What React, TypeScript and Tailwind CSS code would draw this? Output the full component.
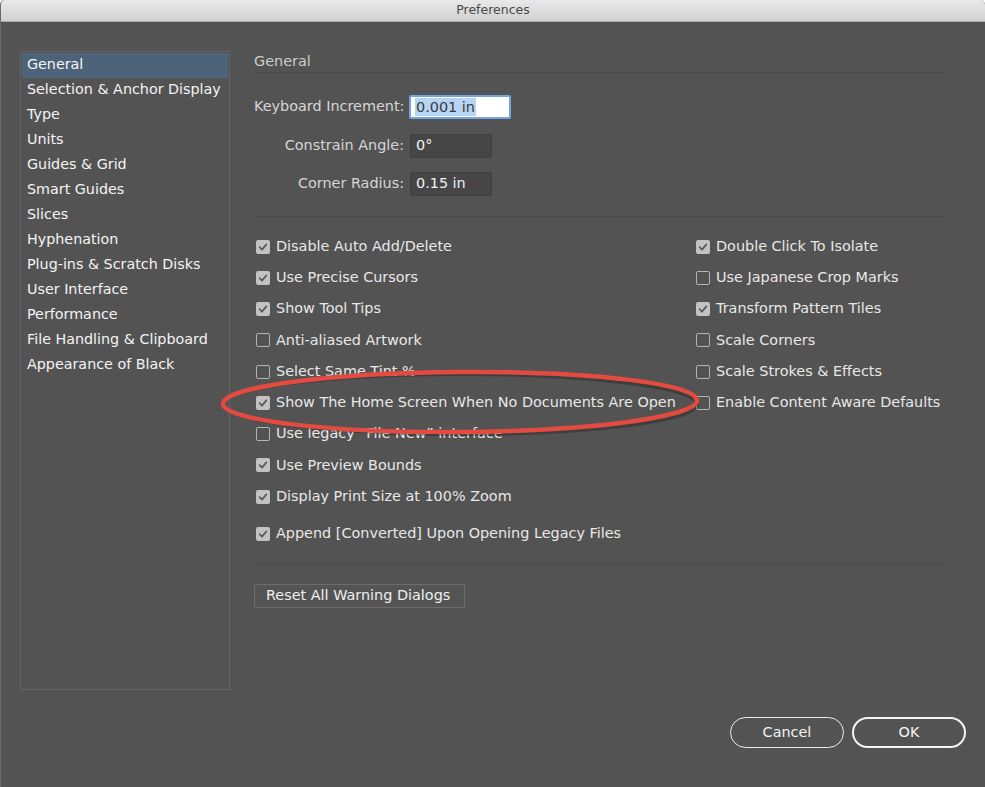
// Preferences dialog — dark panel, sidebar of sections, General page

const sections = [
  'General',
  'Selection & Anchor Display',
  'Type',
  'Units',
  'Guides & Grid',
  'Smart Guides',
  'Slices',
  'Hyphenation',
  'Plug-ins & Scratch Disks',
  'User Interface',
  'Performance',
  'File Handling & Clipboard',
  'Appearance of Black',
];

const leftOptions: [string, boolean][] = [
  ['Disable Auto Add/Delete', true],
  ['Use Precise Cursors', true],
  ['Show Tool Tips', true],
  ['Anti-aliased Artwork', false],
  ['Select Same Tint %', false],
  ['Show The Home Screen When No Documents Are Open', true],
  ['Use legacy \u201cFile New\u201d interface', false],
  ['Use Preview Bounds', true],
  ['Display Print Size at 100% Zoom', true],
];

const rightOptions: [string, boolean][] = [
  ['Double Click To Isolate', true],
  ['Use Japanese Crop Marks', false],
  ['Transform Pattern Tiles', true],
  ['Scale Corners', false],
  ['Scale Strokes & Effects', false],
  ['Enable Content Aware Defaults', false],
];

function Checkbox({ checked }: { checked: boolean }) {
  if (!checked) {
    return <span className="w-[14px] h-[14px] rounded-[2px] border border-[#b4b4b4] shrink-0" />;
  }
  return (
    <span className="w-[14px] h-[14px] rounded-[2px] bg-[#c2c2c2] shrink-0 flex items-center justify-center">
      <svg width="10" height="10" viewBox="0 0 10 10" fill="none">
        <path d="M1.6 5.2 L4 7.6 L8.4 2.4" stroke="#5a5a5a" strokeWidth="1.7" strokeLinecap="round" strokeLinejoin="round" />
      </svg>
    </span>
  );
}

function Option({ label, checked }: { label: string; checked: boolean }) {
  return (
    <div className="h-[31.25px] flex items-center gap-[6px] pl-[2px] text-[14.4px] text-[#e8e8e8] whitespace-nowrap">
      <Checkbox checked={checked} />
      <span>{label}</span>
    </div>
  );
}

export default function App() {
  return (
    <div
      className="relative w-[985px] h-[787px] bg-white overflow-hidden"
      style={{ fontFamily: '"DejaVu Sans", "Noto Sans", sans-serif' }}
    >
      <div className="w-full h-full rounded-t-[5px] overflow-hidden bg-[#535353] border-l border-[#6a6a6a] flex flex-col">
        {/* title bar */}
        <div className="h-[22px] shrink-0 bg-gradient-to-b from-[#e9e9e9] to-[#d1d1d1] border-b border-[#a9a9a9] flex items-center justify-center">
          <span className="text-[12.5px] text-[#4a4a4a]">Preferences</span>
        </div>

        <div className="flex pl-[19px] pt-[29px]">
          {/* section list */}
          <div className="w-[210px] h-[639px] border border-[#646464] p-[1px] shrink-0">
            {sections.map((s, i) => (
              <div
                key={s}
                className={`h-[25px] flex items-center pl-[5px] pb-[2px] text-[14.3px] text-[#f4f4f4] whitespace-nowrap ${
                  i === 0 ? 'bg-[#4c6379]' : ''
                }`}
              >
                {s}
              </div>
            ))}
          </div>

          {/* General page */}
          <div className="ml-[24px] w-[694px]">
            <div className="h-[22px] flex items-center text-[14.4px] text-[#cdcdcd] border-b border-[#494949]">General</div>

            <div className="pt-[22px] flex flex-col gap-[14.5px]">
              <div className="flex items-center">
                <span className="w-[150px] text-right text-[14.4px] text-[#d6d6d6] whitespace-nowrap">Keyboard Increment:</span>
                <div className="ml-[5px] w-[102px] h-[24px] bg-white border-2 border-[#70a5e2] rounded-[2px] flex items-center pl-[4px]">
                  <span className="bg-[#b6d4f4] text-[14.4px] text-[#3a3a3a] leading-[18px] px-[1px]">0.001 in</span>
                </div>
              </div>
              <div className="flex items-center">
                <span className="w-[150px] text-right text-[14.4px] text-[#d6d6d6]">Constrain Angle:</span>
                <div className="ml-[6px] w-[82px] h-[24px] bg-[#464646] border border-[#3f3f3f] rounded-[2px] flex items-center pl-[5px] text-[14.4px] text-[#f2f2f2]">
                  0°
                </div>
              </div>
              <div className="flex items-center">
                <span className="w-[150px] text-right text-[14.4px] text-[#d6d6d6]">Corner Radius:</span>
                <div className="ml-[6px] w-[82px] h-[24px] bg-[#464646] border border-[#3f3f3f] rounded-[2px] flex items-center pl-[5px] text-[14.4px] text-[#f2f2f2]">
                  0.15 in
                </div>
              </div>
            </div>

            <div className="mt-[20px] border-b border-[#494949]" />

            {/* checkbox options */}
            <div className="pt-[14px] flex">
              <div className="w-[440px]">
                {leftOptions.map(([l, c]) => (
                  <Option key={l} label={l} checked={c} />
                ))}
                <div className="mt-[6px]">
                  <Option label="Append [Converted] Upon Opening Legacy Files" checked />
                </div>
              </div>
              <div>
                {rightOptions.map(([l, c]) => (
                  <Option key={l} label={l} checked={c} />
                ))}
              </div>
            </div>

            <div className="mt-[13px] border-b border-[#494949]" />

            <button className="mt-[20px] w-[211px] h-[24px] border border-[#6c6c6c] bg-[#545454] rounded-[2px] text-left pl-[11px] text-[14.4px] text-[#efefef]">
              Reset All Warning Dialogs
            </button>
          </div>
        </div>

        {/* footer buttons */}
        <div className="mt-[27px] flex justify-end gap-[8px] pr-[19px]">
          <button className="w-[114px] h-[31px] rounded-full border-[1.5px] border-[#ececec] text-[14.4px] text-[#f2f2f2]">
            Cancel
          </button>
          <button className="w-[114px] h-[31px] rounded-full border-2 border-[#f4f4f4] text-[14.4px] text-[#f6f6f6]">
            OK
          </button>
        </div>
      </div>

      {/* red annotation ellipse */}
      <svg className="absolute left-0 top-0 pointer-events-none" width="985" height="787">
        <ellipse cx="460" cy="404" rx="237" ry="30" fill="none" stroke="#000" strokeOpacity="0.25" strokeWidth="4" />
        <ellipse cx="460" cy="402" rx="237" ry="30" fill="none" stroke="#e44b40" strokeWidth="4.5" transform="rotate(-0.4 460 402)" />
      </svg>
    </div>
  );
}
